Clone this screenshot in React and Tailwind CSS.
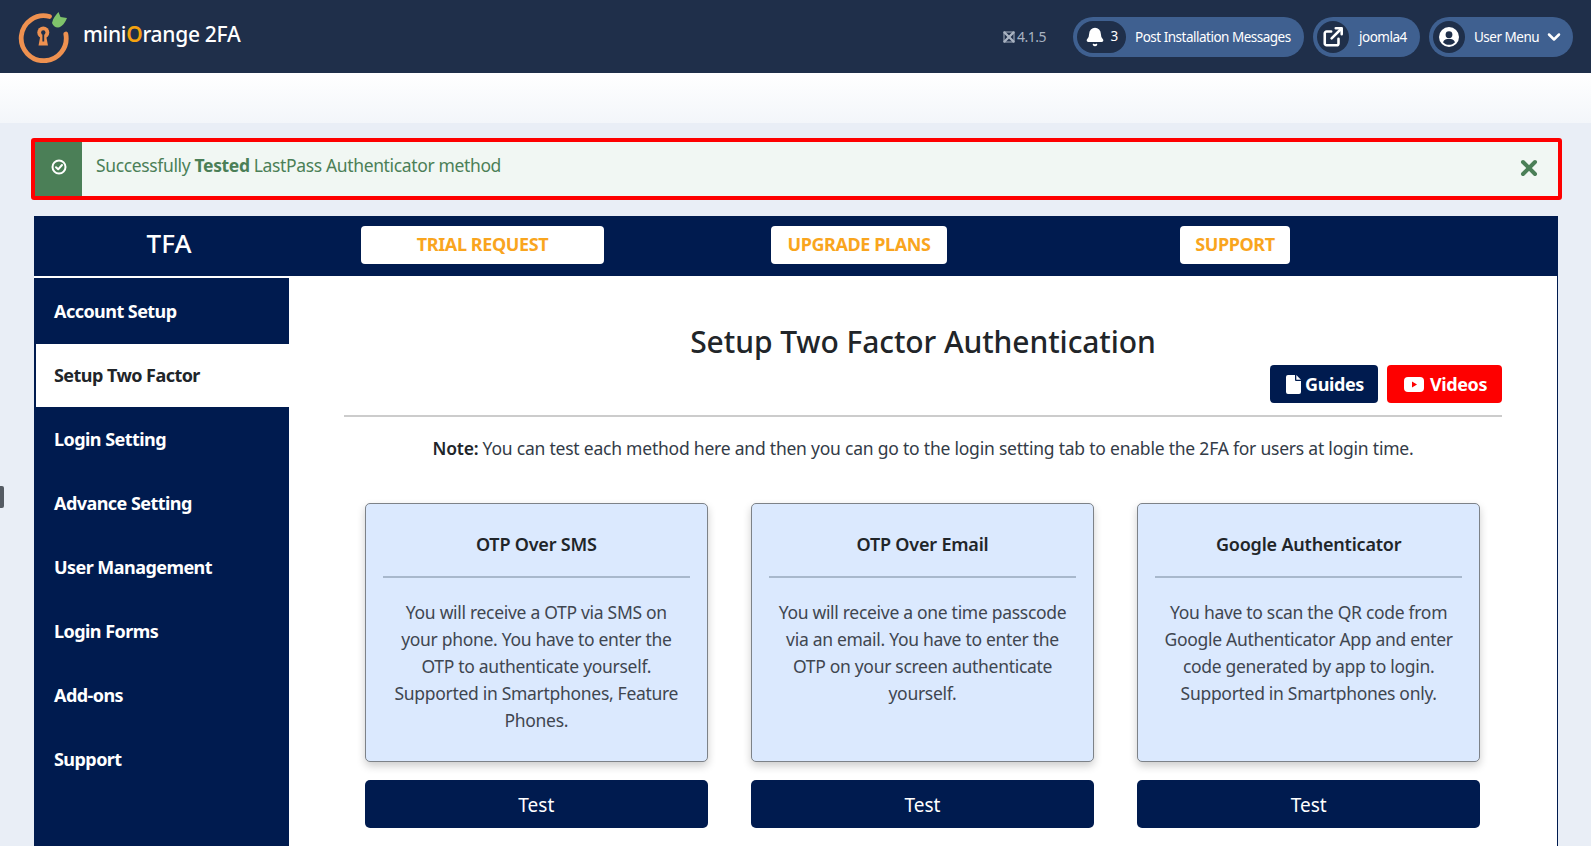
import { Bell, ChevronDown, X } from 'lucide-react';

const menu = ['Account Setup', 'Setup Two Factor', 'Login Setting', 'Advance Setting', 'User Management', 'Login Forms', 'Add-ons', 'Support'];

const methods = [
  {
    title: 'OTP Over SMS',
    lines: ['You will receive a OTP via SMS on', 'your phone. You have to enter the', 'OTP to authenticate yourself.', 'Supported in Smartphones, Feature', 'Phones.'],
  },
  {
    title: 'OTP Over Email',
    lines: ['You will receive a one time passcode', 'via an email. You have to enter the', 'OTP on your screen authenticate', 'yourself.'],
  },
  {
    title: 'Google Authenticator',
    lines: ['You have to scan the QR code from', 'Google Authenticator App and enter', 'code generated by app to login.', 'Supported in Smartphones only.'],
  },
];

const Logo = () => (
  <svg width="52" height="52" viewBox="0 0 52 52" fill="none">
    <path d="M31.500 5.500 A22.500 22.500 0 1 0 47.800 23" stroke="#ee9150" strokeWidth="4.800" strokeLinecap="round" />
    <path d="M34 12 C35 7 38 4 40.500 1 L42.500 6 L49 7 C47 12 44 16 40 16.500 C37 16.500 35 14.500 34 12Z" fill="#7fc36b" />
    <circle cx="25.300" cy="21.500" r="6" fill="#ee9150" />
    <path d="M22.500 24 H28 L30 34.500 H20.500Z" fill="#ee9150" />
    <circle cx="25.300" cy="21.500" r="2.200" fill="#1f2f4a" />
    <rect x="24.400" y="22.500" width="1.800" height="8" fill="#1f2f4a" />
  </svg>
);

const ExternalIcon = () => (
  <svg width="22" height="22" viewBox="0 0 24 24" fill="none" stroke="white" strokeWidth="2.800" strokeLinecap="round" strokeLinejoin="round">
    <path d="M18 14v5a2 2 0 0 1-2 2H5a2 2 0 0 1-2-2V8a2 2 0 0 1 2-2h5" />
    <path d="M15 2.500h6.500V9" />
    <path d="M21 3 10.500 13.500" />
  </svg>
);

const UserIcon = () => (
  <svg width="20" height="20" viewBox="0 0 20 20">
    <circle cx="10" cy="10" r="10" fill="white" />
    <circle cx="10" cy="7.700" r="3.400" fill="#1f2f4a" />
    <path d="M4 15.200c1-2.600 3.300-3.400 6-3.400s5 .8 6 3.400c-1.500 1.700-3.600 2.600-6 2.600s-4.500-.9-6-2.600Z" fill="#1f2f4a" />
  </svg>
);

const JoomlaMark = () => (
  <svg width="14" height="14" viewBox="0 0 14 14" fill="none" stroke="#a9b3c2" strokeWidth="2.400" strokeLinecap="round">
    <path d="M2.500 2.500 11.500 11.500" />
    <path d="M11.500 2.500 2.500 11.500" />
    <rect x="2" y="2" width="10" height="10" strokeWidth="1" />
  </svg>
);

const CheckCircle = () => (
  <svg width="16" height="16" viewBox="0 0 16 16" fill="none" stroke="white" strokeWidth="2">
    <circle cx="8" cy="8" r="6.500" />
    <path d="M5 8.200 7.200 10.300 11 6" strokeLinecap="round" strokeLinejoin="round" />
  </svg>
);

const DocIcon = () => (
  <svg width="15" height="19" viewBox="0 0 15 19">
    <path d="M2 0H9V5a1 1 0 0 0 1 1H15V17a2 2 0 0 1-2 2H2a2 2 0 0 1-2-2V2a2 2 0 0 1 2-2Z" fill="white" />
    <path d="M10.300 0 15 4.700H10.300Z" fill="white" />
  </svg>
);

const YoutubeIcon = () => (
  <svg width="20" height="15" viewBox="0 0 20 15">
    <rect width="20" height="15" rx="4" fill="white" />
    <path d="M8 4.500 13 7.500 8 10.500Z" fill="#fe0000" />
  </svg>
);

const App = () => {
  return (
    <div className="relative h-screen overflow-hidden bg-[#e9eef6] font-['Noto_Sans',sans-serif]">
      <header className="flex h-[73px] items-center justify-between bg-[#1f2f4a] pl-[18px] pr-[18px]">
        <div className="flex items-center">
          <Logo />
          <div className="mb-[4px] ml-[13px] text-[21px] font-medium leading-none tracking-[-0.3px] text-white">
            mini<span className="font-semibold text-[#f5a30f]">O</span>range 2FA
          </div>
        </div>
        <div className="flex items-center text-[13.500px] tracking-[-0.5px] text-white">
          <div className="mr-[27px] flex items-center gap-[1px] text-[14px] text-[#a9b3c2]">
            <JoomlaMark />
            4.1.5
          </div>
          <div className="flex h-[40px] w-[231px] items-center rounded-full bg-[#3f6090] pl-[4px]">
            <div className="flex h-[32px] w-[49px] items-center justify-center gap-[5px] rounded-full bg-[#1f2f4a]">
              <Bell size={20} fill="white" strokeWidth={2} />
              <span>3</span>
            </div>
            <span className="ml-[9px] pt-[1px]">Post Installation Messages</span>
          </div>
          <div className="ml-[9px] flex h-[40px] w-[107px] items-center rounded-full bg-[#3f6090] pl-[4px]">
            <div className="flex h-[32px] w-[32px] items-center justify-center rounded-full bg-[#1f2f4a]">
              <ExternalIcon />
            </div>
            <span className="ml-[10px] pt-[1px]">joomla4</span>
          </div>
          <div className="ml-[9px] flex h-[40px] w-[144px] items-center rounded-full bg-[#3f6090] pl-[4px]">
            <div className="flex h-[32px] w-[32px] items-center justify-center rounded-full bg-[#1f2f4a]">
              <UserIcon />
            </div>
            <span className="ml-[9px] pt-[1px]">User Menu</span>
            <ChevronDown size={20} strokeWidth={3} className="ml-[5px]" />
          </div>
        </div>
      </header>

      <div className="h-[50px] bg-gradient-to-b from-white to-[#f3f6fa]" />

      <div className="pl-[31px] pr-[29px] pt-[15px]">
        <div className="flex h-[62px] rounded-[3px] border-[4px] border-[#fe0000] bg-[#f1f7f3]">
          <div className="flex w-[47px] shrink-0 items-center justify-center bg-[#4b7f57] pb-[4px]">
            <CheckCircle />
          </div>
          <div className="flex-1 pl-[14px] pt-[10px] text-[17.500px] leading-[26px] tracking-[-0.36px] text-[#4b7f57]">
            Successfully <b className="font-bold">Tested</b> LastPass Authenticator method
          </div>
          <div className="flex w-[60px] items-center justify-center pb-[3px] pl-[2px]">
            <X size={24} strokeWidth={4} className="text-[#4b7f57]" />
          </div>
        </div>
      </div>

      <div className="ml-[34px] mr-[33px] mt-[16px]">
        <div className="flex h-[60px] items-center bg-[#001b4f] pb-[2px]">
          <div className="mb-[5px] w-[270px] text-center text-[26px] font-medium leading-[36px] text-white">TFA</div>
          <button className="ml-[57px] h-[38px] w-[243px] rounded-[4px] bg-white pb-[1px] text-[18px] font-bold tracking-[-0.4px] text-[#f9a51e]">TRIAL REQUEST</button>
          <button className="ml-[167px] h-[38px] w-[176px] rounded-[4px] bg-white pb-[1px] text-[18px] font-bold tracking-[-0.4px] text-[#f9a51e]">UPGRADE PLANS</button>
          <button className="ml-[233px] h-[38px] w-[110px] rounded-[4px] bg-white pb-[1px] text-[18px] font-bold tracking-[-0.4px] text-[#f9a51e]">SUPPORT</button>
        </div>

        <div className="flex h-[600px] border-r border-[#001b4f] bg-white">
          <nav className="mt-[2px] w-[255px] shrink-0 border-l-[2px] border-[#001b4f] bg-[#001b4f] pt-[1px]">
            {menu.map((item, i) => (
              <div
                key={item}
                className={`flex items-center pl-[18px] text-[18px] font-bold tracking-[-0.55px] ${i === 1 ? 'h-[63px] bg-white text-[#212529]' : i === 0 ? 'h-[65px] text-white' : 'h-[64px] text-white'}`}
              >
                {item}
              </div>
            ))}
          </nav>

          <main className="flex-1 pl-[55px] pr-[55px]">
            <h1 className="mt-[44px] text-center text-[30px] font-medium leading-[44px] tracking-[-0.08px] text-[#212529]">Setup Two Factor Authentication</h1>
            <div className="mt-[1px] flex justify-end gap-[9px] border-b-2 border-[#cccccc] pb-[12px]">
              <button className="flex h-[38px] w-[108px] items-center justify-center gap-[4px] rounded-[4px] bg-[#001b4f] pl-[2px] text-[18px] font-bold tracking-[-0.4px] text-white">
                <DocIcon />
                Guides
              </button>
              <button className="flex h-[38px] w-[115px] items-center justify-center gap-[6px] rounded-[4px] bg-[#fe0000] pl-[2px] text-[18px] font-bold tracking-[-0.4px] text-white">
                <YoutubeIcon />
                Videos
              </button>
            </div>
            <p className="mt-[18px] text-center text-[17.500px] leading-[26px] tracking-[-0.22px] text-[#333b47]">
              <b className="font-semibold text-[#212529]">Note:</b> You can test each method here and then you can go to the login setting tab to enable the 2FA for users at login time.
            </p>
            <div className="mt-[42px] grid grid-cols-3 gap-[43.500px] pl-[21px] pr-[22px]">
              {methods.map((m) => (
                <div key={m.title}>
                  <div className="h-[259px] rounded-[5px] border border-[#7d8288] bg-[#dbe9fe] px-[17px] shadow-[0_4px_8px_rgba(0,0,0,0.2)]">
                    <h3 className="flex h-[74px] items-center justify-center border-b-2 border-[#a8b8cc] pt-[8px] text-[18px] font-semibold tracking-[-0.2px] text-[#212529]">{m.title}</h3>
                    <div className="pt-[21px] text-center text-[17.500px] leading-[27px] tracking-[-0.3px] text-[#3f4650]">
                      {m.lines.map((line) => (
                        <div key={line}>{line}</div>
                      ))}
                    </div>
                  </div>
                  <button className="mt-[18px] h-[48px] w-full rounded-[5px] bg-[#001b4f] pt-[2px] text-[19px] text-white">Test</button>
                </div>
              ))}
            </div>
          </main>
        </div>
      </div>

      <div className="absolute left-0 top-[486px] h-[22px] w-[4px] rounded-r-[2px] bg-[#555b63]" />
    </div>
  );
};

export default App;
